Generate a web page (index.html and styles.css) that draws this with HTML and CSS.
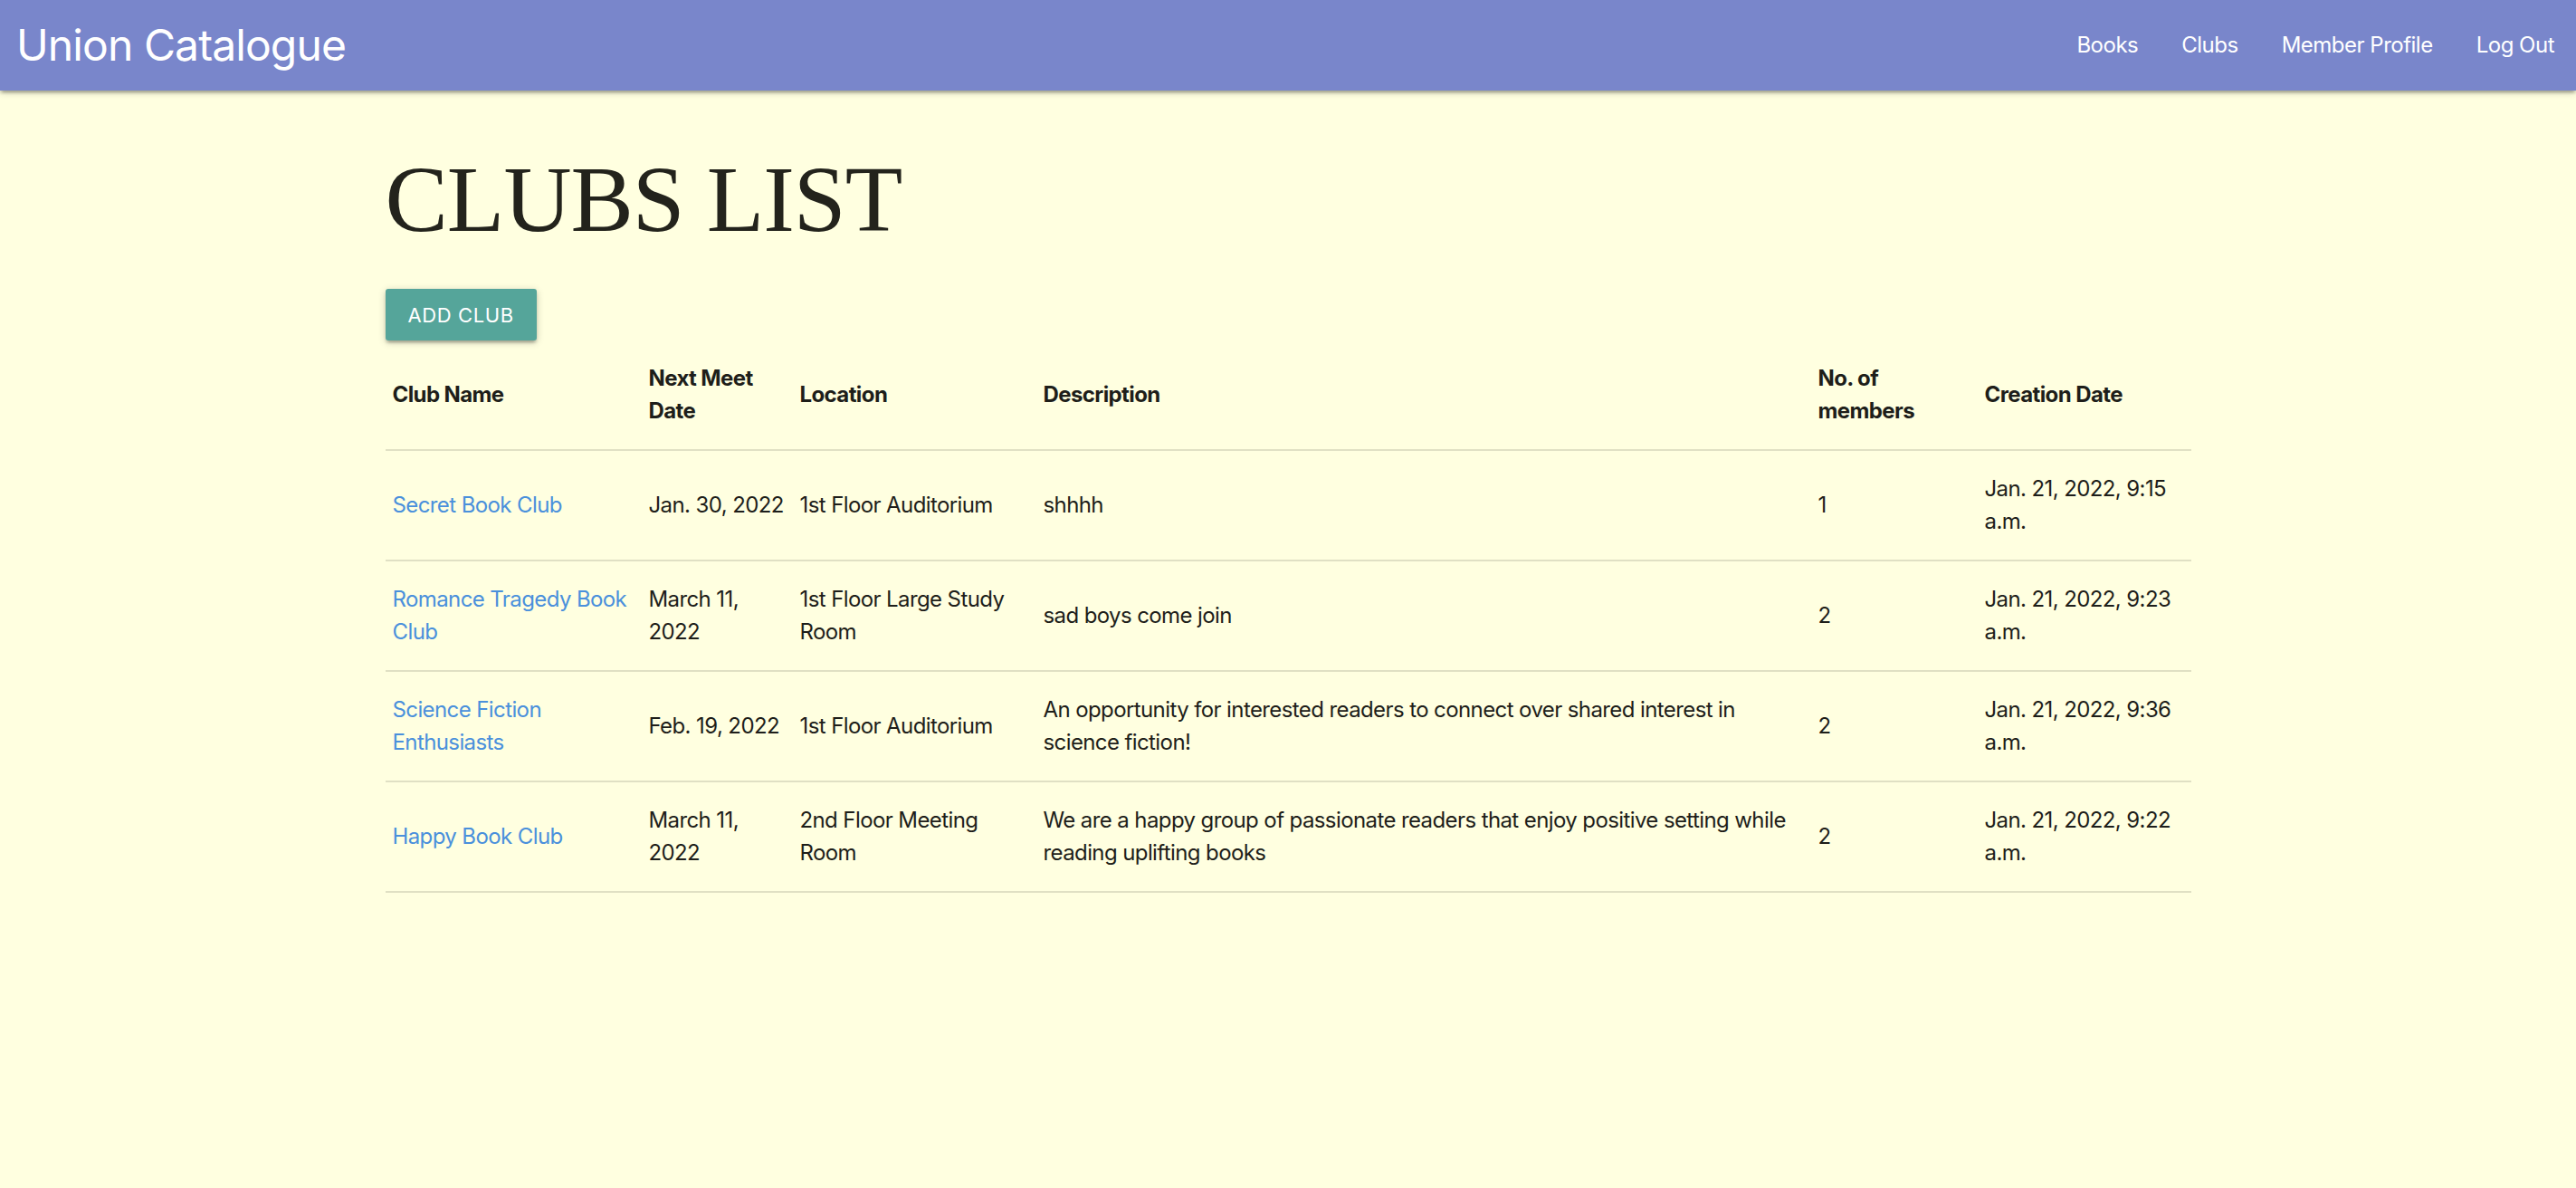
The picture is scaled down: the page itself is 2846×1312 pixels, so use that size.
FILE: index.html
```html
<!DOCTYPE html>
<html lang="en">
<head>
<meta charset="utf-8">
<title>Clubs List - Union Catalogue</title>
<link rel="stylesheet" href="styles.css">
</head>
<body>
<nav class="topnav">
  <a class="brand" href="#">Union Catalogue</a>
  <ul class="navlinks">
    <li><a href="#">Books</a></li>
    <li><a href="#">Clubs</a></li>
    <li><a href="#">Member Profile</a></li>
    <li><a href="#">Log Out</a></li>
  </ul>
</nav>
<main class="container">
  <h1 class="page-title">CLUBS LIST</h1>
  <div class="actions">
    <a class="btn" href="#">Add Club</a>
  </div>
  <table class="clubs">
    <colgroup>
      <col class="c-name">
      <col class="c-date">
      <col class="c-loc">
      <col class="c-desc">
      <col class="c-num">
      <col class="c-created">
    </colgroup>
    <thead>
      <tr>
        <th>Club Name</th>
        <th>Next Meet Date</th>
        <th>Location</th>
        <th>Description</th>
        <th>No. of members</th>
        <th>Creation Date</th>
      </tr>
    </thead>
    <tbody>
      <tr>
        <td><a href="#">Secret Book Club</a></td>
        <td>Jan. 30, 2022</td>
        <td>1st Floor Auditorium</td>
        <td>shhhh</td>
        <td>1</td>
        <td>Jan. 21, 2022, 9:15 a.m.</td>
      </tr>
      <tr>
        <td><a href="#">Romance Tragedy Book Club</a></td>
        <td>March 11, 2022</td>
        <td>1st Floor Large Study Room</td>
        <td>sad boys come join</td>
        <td>2</td>
        <td>Jan. 21, 2022, 9:23 a.m.</td>
      </tr>
      <tr>
        <td><a href="#">Science Fiction Enthusiasts</a></td>
        <td>Feb. 19, 2022</td>
        <td>1st Floor Auditorium</td>
        <td>An opportunity for interested readers to connect over shared interest in science fiction!</td>
        <td>2</td>
        <td>Jan. 21, 2022, 9:36 a.m.</td>
      </tr>
      <tr>
        <td><a href="#">Happy Book Club</a></td>
        <td>March 11, 2022</td>
        <td>2nd Floor Meeting Room</td>
        <td>We are a happy group of passionate readers that enjoy positive setting while reading uplifting books</td>
        <td>2</td>
        <td>Jan. 21, 2022, 9:22 a.m.</td>
      </tr>
    </tbody>
  </table>
</main>
</body>
</html>
```
FILE: styles.css
```css
html, body {
  margin: 0;
  padding: 0;
}
body {
  background: #ffffe0;
  color: rgba(0, 0, 0, 0.87);
  font-family: Inter, Roboto, "Liberation Sans", sans-serif;
  font-size: 24px;
  line-height: 36px;
}
a {
  text-decoration: none;
}
.topnav {
  height: 100px;
  background: #7986cb;
  display: flex;
  align-items: center;
  justify-content: space-between;
  box-shadow: 0 3px 3px 0 rgba(0,0,0,0.14), 0 5px 2px -3px rgba(0,0,0,0.12), 0 2px 8px 0 rgba(0,0,0,0.2);
  position: relative;
}
.brand {
  color: #fff;
  font-size: 48px;
  letter-spacing: -0.9px;
  padding-left: 18px;
  line-height: 100px;
}
.navlinks {
  list-style: none;
  margin: 0;
  padding: 0;
  display: flex;
}
.navlinks a {
  color: #fff;
  display: block;
  padding: 0 24px;
  font-size: 24px;
  letter-spacing: -0.5px;
  line-height: 100px;
}
.container {
  width: 1995px;
  margin: 0 auto;
}
.page-title {
  font-family: "Liberation Serif", "DejaVu Serif", serif;
  font-weight: 400;
  font-size: 104px;
  line-height: 112px;
  letter-spacing: -1px;
  color: #23231c;
  margin: 64px 0 43px;
}
.actions {
  display: flex;
}
.btn {
  display: flex;
  align-items: center;
  height: 57px;
  padding: 0 25px;
  background: #55a59a;
  color: #fff;
  font-size: 22px;
  letter-spacing: 0.6px;
  text-transform: uppercase;
  border-radius: 3px;
  box-shadow: 0 3px 3px 0 rgba(0,0,0,0.14), 0 5px 2px -3px rgba(0,0,0,0.12), 0 2px 8px 0 rgba(0,0,0,0.2);
}
.clubs {
  width: 100%;
  border-collapse: collapse;
  table-layout: fixed;
}
.c-name { width: 283px; }
.c-date { width: 167px; }
.c-loc { width: 269px; }
.c-desc { width: 856px; }
.c-num { width: 184px; }
.c-created { width: 236px; }
.clubs th,
.clubs td {
  padding: 24px 8px;
  text-align: left;
  vertical-align: middle;
  font-size: 24px;
  line-height: 36px;
  letter-spacing: -0.6px;
}
.clubs th {
  font-weight: 700;
  color: #1e1e1a;
}
.clubs td {
  color: #1e1e1a;
}
.clubs tr {
  border-bottom: 2px solid rgba(0, 0, 0, 0.12);
}
.clubs td a {
  color: #4a90dc;
}
```
